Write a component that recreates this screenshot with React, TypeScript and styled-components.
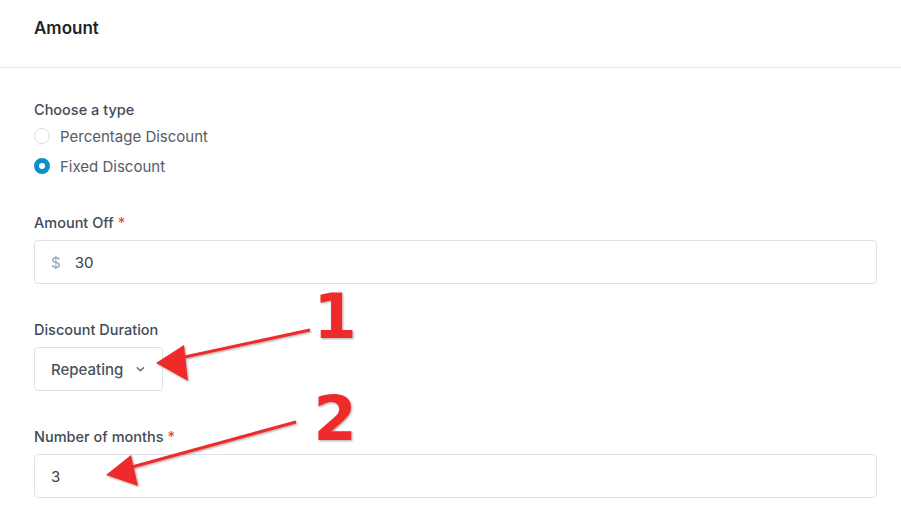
import * as React from "react";
import styled, { createGlobalStyle } from "styled-components";

const Global = createGlobalStyle`
  html, body {
    margin: 0;
    padding: 0;
    background: #ffffff;
  }
  body {
    font-family: Inter, Roboto, "Noto Sans", sans-serif;
    color: #3c4350;
  }
`;

const Page = styled.div`
  position: relative;
  width: 901px;
  height: 514px;
  overflow: hidden;
`;

const Header = styled.div`
  height: 68px;
  padding-left: 34px;
  display: flex;
  align-items: center;
  border-bottom: 1px solid #e3e6ea;
  box-sizing: border-box;
  padding-bottom: 12px;
`;

const Title = styled.h2`
  margin: 0;
  font-size: 17px;
  font-weight: 600;
  color: #1f2329;
`;

const Body = styled.div`
  padding: 32px 24px 0 34px;
  display: flex;
  flex-direction: column;
`;

const Group = styled.div<{ $top?: number }>`
  display: flex;
  flex-direction: column;
  margin-top: ${(p) => p.$top ?? 0}px;
`;

const Label = styled.div<{ $gap?: number }>`
  font-size: 14.5px;
  line-height: 20px;
  font-weight: 500;
  color: #434a56;
  margin-bottom: ${(p) => p.$gap ?? 7}px;
`;

const Star = styled.span`
  color: #e5484d;
  margin-left: 4px;
`;

const RadioRow = styled.label`
  display: flex;
  align-items: center;
  height: 30px;
  gap: 10px;
  font-size: 15px;
  color: #555c68;
`;

const RadioDot = styled.span<{ $on?: boolean }>`
  width: 16px;
  height: 16px;
  border-radius: 50%;
  box-sizing: border-box;
  border: ${(p) => (p.$on ? "5px solid #0d8fc9" : "1px solid #d8dce1")};
  background: #fff;
`;

const Field = styled.div<{ $width?: string }>`
  display: flex;
  align-items: center;
  height: 44px;
  width: ${(p) => p.$width ?? "auto"};
  box-sizing: border-box;
  border: 1px solid #dfe3e8;
  border-radius: 4px;
  padding: 0 16px;
  font-size: 15px;
  color: #3a404b;
  background: #fff;
`;

const Prefix = styled.span`
  color: #9aa1ab;
  margin-right: 14px;
`;

const SelectText = styled.span`
  font-weight: 500;
  color: #4a515c;
  margin-right: 12px;
`;

const Overlay = styled.svg`
  position: absolute;
  left: 0;
  top: 0;
  pointer-events: none;
`;

const Chevron = () => (
  <svg width="12" height="12" viewBox="0 0 12 12">
    <path d="M2.5 4.5 L6 8 L9.5 4.5" fill="none" stroke="#5b626d" strokeWidth="1.5" strokeLinecap="round" strokeLinejoin="round" />
  </svg>
);

const Annotations = () => (
  <Overlay width="901" height="514" viewBox="0 0 901 514">
    <defs>
      <filter id="shade" x="-20%" y="-20%" width="140%" height="140%">
        <feDropShadow dx="1" dy="1" stdDeviation="1.2" floodColor="#000" floodOpacity="0.35" />
      </filter>
    </defs>
    <g fill="#ef2b2b" stroke="#ef2b2b" filter="url(#shade)">
      <line x1="310" y1="330" x2="180" y2="358" strokeWidth="3" />
      <polygon points="156,363 184,345 188,381" stroke="none" />
      <line x1="296" y1="422" x2="132" y2="467" strokeWidth="3" />
      <polygon points="106,475 131,455 138,486" stroke="none" />
      <text x="335" y="338" fontFamily="'DejaVu Sans', sans-serif" fontWeight="900" fontSize="62" textAnchor="middle" stroke="none">1</text>
      <text x="335" y="440" fontFamily="'DejaVu Sans', sans-serif" fontWeight="900" fontSize="62" textAnchor="middle" stroke="none">2</text>
    </g>
  </Overlay>
);

export default function App() {
  return (
    <Page>
      <Global />
      <Header>
        <Title>Amount</Title>
      </Header>
      <Body>
        <Group>
          <Label $gap={1}>Choose a type</Label>
          <RadioRow>
            <RadioDot />
            Percentage Discount
          </RadioRow>
          <RadioRow>
            <RadioDot $on />
            Fixed Discount
          </RadioRow>
        </Group>
        <Group $top={32}>
          <Label>
            Amount Off<Star>*</Star>
          </Label>
          <Field>
            <Prefix>$</Prefix>
            30
          </Field>
        </Group>
        <Group $top={36}>
          <Label>Discount Duration</Label>
          <Field $width="129px">
            <SelectText>Repeating</SelectText>
            <Chevron />
          </Field>
        </Group>
        <Group $top={36}>
          <Label>
            Number of months<Star>*</Star>
          </Label>
          <Field>3</Field>
        </Group>
      </Body>
      <Annotations />
    </Page>
  );
}
